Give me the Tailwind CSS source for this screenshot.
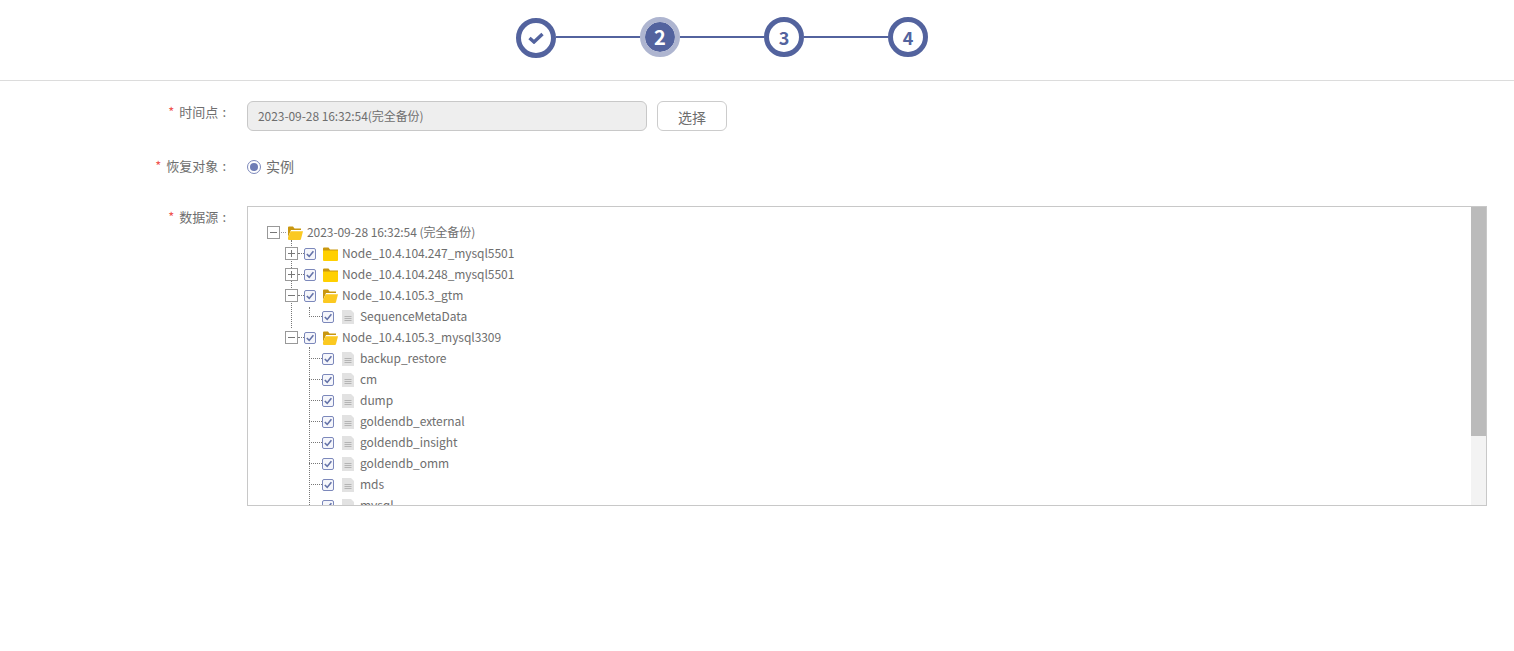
<!DOCTYPE html>
<html lang="en">
<head>
<meta charset="UTF-8">
<title>恢复</title>
<script src="https://cdn.jsdelivr.net/npm/@tailwindcss/browser@4"></script>
</head>
<body class="bg-white text-[#6e6e6e] font-['Noto_Sans_CJK_SC','Noto_Sans',sans-serif]">
<svg class="hidden">
  <symbol id="open" viewBox="0 0 15 14"><path d="M0 1.5 a1 1 0 0 1 1-1 h4 l1.5 2 H13 v1.5 H3 L0 11z" fill="#c9970f"/><path d="M2.6 5.2 H15 L13 13 Q12.8 14 12 14 H1 Q0 14 0 13 V11.5 z" fill="#fbc921"/></symbol>
  <symbol id="closed" viewBox="0 0 15 14"><path d="M0 1.5 a1 1 0 0 1 1-1 h4.5 l1.5 2 H15 V4 H0z" fill="#c9970f"/><path d="M0 3.5 H15 V13 a1 1 0 0 1-1 1 H1 a1 1 0 0 1-1-1z" fill="#ffd000"/></symbol>
  <symbol id="file" viewBox="0 0 12 14"><path d="M0 0 H9 L12 3 V14 H0z" fill="#e2e2e2"/><path d="M2.5 6.5 H9.5 M2.5 8.5 H9.5 M2.5 10.5 H9.5" stroke="#b4b4b4" stroke-width="1"/></symbol>
  <symbol id="check" viewBox="0 0 12 12"><rect x=".5" y=".5" width="11" height="11" rx="1.5" fill="#f5f6fb" stroke="#7c88bb"/><path d="M2.8 6 L5.2 8.4 L9.4 3.2" fill="none" stroke="#6472a8" stroke-width="1.6"/></symbol>
  <symbol id="minus" viewBox="0 0 13 13"><rect x=".5" y=".5" width="12" height="12" fill="#fff" stroke="#999"/><path d="M3 6.5 H10" stroke="#777"/></symbol>
  <symbol id="plus" viewBox="0 0 13 13"><rect x=".5" y=".5" width="12" height="12" fill="#fff" stroke="#999"/><path d="M3 6.5 H10 M6.5 3 V10" stroke="#777"/></symbol>
</svg>

<!-- Steps -->
<div class="h-[81px] border-b border-[#dcdcdc] pl-[516px] pt-[17px]">
  <div class="flex items-start">
    <div class="w-10 h-10 mt-px rounded-full border-[5px] border-[#53639e] flex items-center justify-center">
      <svg class="w-4 h-3" viewBox="0 0 16 12"><path d="M1.5 6 L6 10 L14.5 2" fill="none" stroke="#53639e" stroke-width="3.4"/></svg>
    </div>
    <div class="w-[84px] h-[2px] mt-[19px] bg-[#53639e]"></div>
    <div class="w-10 h-10 rounded-full border-[5px] border-[#aeb5d0] bg-[#53639e] bg-clip-padding text-white font-bold text-[20px] flex items-center justify-center">2</div>
    <div class="w-[84px] h-[2px] mt-[19px] bg-[#53639e]"></div>
    <div class="w-10 h-10 rounded-full border-[5px] border-[#53639e] text-[#53639e] font-bold text-[18px] flex items-center justify-center">3</div>
    <div class="w-[84px] h-[2px] mt-[19px] bg-[#53639e]"></div>
    <div class="w-10 h-10 rounded-full border-[5px] border-[#53639e] text-[#53639e] font-bold text-[18px] flex items-center justify-center">4</div>
  </div>
</div>

<!-- Form -->
<div class="pt-5">
  <div class="flex items-start h-[30px]">
    <label class="w-[247px] pr-[21px] text-right text-[13px] leading-[22px]"><span class="text-[#f0554f] mr-[5px]">*</span>时间点<span class="ml-[4px]">:</span></label>
    <div class="w-[400px] h-[30px] rounded-md border border-[#c8c8c8] bg-[#eeeeee] px-[10px] text-[12px] tracking-[-0.06px] leading-[27px]">2023-09-28 16:32:54(完全备份)</div>
    <button class="ml-[10px] w-[70px] h-[30px] rounded-md border border-[#cccccc] text-[14px] leading-[30px]">选择</button>
  </div>
  <div class="flex items-center h-6 mt-6">
    <label class="w-[247px] pr-[21px] pb-[2px] text-right text-[13px]"><span class="text-[#f0554f] mr-[5px]">*</span>恢复对象<span class="ml-[4px]">:</span></label>
    <span class="w-[14px] h-[14px] rounded-full border border-[#7c88bb] flex items-center justify-center"><span class="w-2 h-2 rounded-full bg-[#6f7db5]"></span></span>
    <span class="ml-[5px] pb-[2px] text-[14px]">实例</span>
  </div>
  <div class="flex items-start mt-[27px]">
    <label class="w-[247px] pr-[21px] text-right text-[13px] leading-[22px]"><span class="text-[#f0554f] mr-[5px]">*</span>数据源<span class="ml-[4px]">:</span></label>
    <div class="w-[1240px] h-[300px] border border-[#c8c8c8] flex">
      <div class="relative flex-1 overflow-hidden pt-[15px] text-[12px] tracking-[-0.06px] [&>div>span:last-child]:pb-[2px]">
        <!-- dotted connectors -->
        <div class="absolute left-[43px] top-[33px] h-[88px] border-l border-dotted border-[#777]"></div>
        <div class="absolute left-[61px] top-[100px] h-[10px] border-l border-dotted border-[#777]"></div>
        <div class="absolute left-[61px] top-[140px] h-[160px] border-l border-dotted border-[#777]"></div>

        <div class="h-[21px] flex items-center pl-[19px]">
          <svg class="w-[13px] h-[13px]"><use href="#minus"/></svg>
          <span class="w-[5px] ml-[1px] border-t border-dotted border-[#999]"></span>
          <svg class="ml-[2px] w-[15px] h-[14px]"><use href="#open"/></svg>
          <span class="ml-[4px] whitespace-nowrap">2023-09-28 16:32:54 (完全备份)</span>
        </div>

        <div class="h-[21px] flex items-center pl-[37px]">
          <svg class="w-[13px] h-[13px] z-10"><use href="#plus"/></svg>
          <span class="w-[6px] border-t border-dotted border-[#777]"></span>
          <svg class="w-3 h-3"><use href="#check"/></svg>
          <svg class="ml-[7px] w-[15px] h-[14px]"><use href="#closed"/></svg>
          <span class="ml-1">Node_10.4.104.247_mysql5501</span>
        </div>
        <div class="h-[21px] flex items-center pl-[37px]">
          <svg class="w-[13px] h-[13px] z-10"><use href="#plus"/></svg>
          <span class="w-[6px] border-t border-dotted border-[#777]"></span>
          <svg class="w-3 h-3"><use href="#check"/></svg>
          <svg class="ml-[7px] w-[15px] h-[14px]"><use href="#closed"/></svg>
          <span class="ml-1">Node_10.4.104.248_mysql5501</span>
        </div>
        <div class="h-[21px] flex items-center pl-[37px]">
          <svg class="w-[13px] h-[13px] z-10"><use href="#minus"/></svg>
          <span class="w-[6px] border-t border-dotted border-[#777]"></span>
          <svg class="w-3 h-3"><use href="#check"/></svg>
          <svg class="ml-[7px] w-[15px] h-[14px]"><use href="#open"/></svg>
          <span class="ml-1">Node_10.4.105.3_gtm</span>
        </div>
        <div class="h-[21px] flex items-center pl-[61px]">
          <span class="w-[13px] border-t border-dotted border-[#777]"></span>
          <svg class="w-3 h-3"><use href="#check"/></svg>
          <svg class="ml-[8px] w-3 h-[14px]"><use href="#file"/></svg>
          <span class="ml-[6px]">SequenceMetaData</span>
        </div>
        <div class="h-[21px] flex items-center pl-[37px]">
          <svg class="w-[13px] h-[13px] z-10"><use href="#minus"/></svg>
          <span class="w-[6px] border-t border-dotted border-[#777]"></span>
          <svg class="w-3 h-3"><use href="#check"/></svg>
          <svg class="ml-[7px] w-[15px] h-[14px]"><use href="#open"/></svg>
          <span class="ml-1">Node_10.4.105.3_mysql3309</span>
        </div>
        <div class="h-[21px] flex items-center pl-[61px]">
          <span class="w-[13px] border-t border-dotted border-[#777]"></span>
          <svg class="w-3 h-3"><use href="#check"/></svg>
          <svg class="ml-[8px] w-3 h-[14px]"><use href="#file"/></svg>
          <span class="ml-[6px]">backup_restore</span>
        </div>
        <div class="h-[21px] flex items-center pl-[61px]">
          <span class="w-[13px] border-t border-dotted border-[#777]"></span>
          <svg class="w-3 h-3"><use href="#check"/></svg>
          <svg class="ml-[8px] w-3 h-[14px]"><use href="#file"/></svg>
          <span class="ml-[6px]">cm</span>
        </div>
        <div class="h-[21px] flex items-center pl-[61px]">
          <span class="w-[13px] border-t border-dotted border-[#777]"></span>
          <svg class="w-3 h-3"><use href="#check"/></svg>
          <svg class="ml-[8px] w-3 h-[14px]"><use href="#file"/></svg>
          <span class="ml-[6px]">dump</span>
        </div>
        <div class="h-[21px] flex items-center pl-[61px]">
          <span class="w-[13px] border-t border-dotted border-[#777]"></span>
          <svg class="w-3 h-3"><use href="#check"/></svg>
          <svg class="ml-[8px] w-3 h-[14px]"><use href="#file"/></svg>
          <span class="ml-[6px]">goldendb_external</span>
        </div>
        <div class="h-[21px] flex items-center pl-[61px]">
          <span class="w-[13px] border-t border-dotted border-[#777]"></span>
          <svg class="w-3 h-3"><use href="#check"/></svg>
          <svg class="ml-[8px] w-3 h-[14px]"><use href="#file"/></svg>
          <span class="ml-[6px]">goldendb_insight</span>
        </div>
        <div class="h-[21px] flex items-center pl-[61px]">
          <span class="w-[13px] border-t border-dotted border-[#777]"></span>
          <svg class="w-3 h-3"><use href="#check"/></svg>
          <svg class="ml-[8px] w-3 h-[14px]"><use href="#file"/></svg>
          <span class="ml-[6px]">goldendb_omm</span>
        </div>
        <div class="h-[21px] flex items-center pl-[61px]">
          <span class="w-[13px] border-t border-dotted border-[#777]"></span>
          <svg class="w-3 h-3"><use href="#check"/></svg>
          <svg class="ml-[8px] w-3 h-[14px]"><use href="#file"/></svg>
          <span class="ml-[6px]">mds</span>
        </div>
        <div class="h-[21px] flex items-center pl-[61px]">
          <span class="w-[13px] border-t border-dotted border-[#777]"></span>
          <svg class="w-3 h-3"><use href="#check"/></svg>
          <svg class="ml-[8px] w-3 h-[14px]"><use href="#file"/></svg>
          <span class="ml-[6px]">mysql</span>
        </div>
      </div>
      <div class="w-[15px] bg-[#f3f3f3]"><div class="h-[229px] bg-[#bbbbbb]"></div></div>
    </div>
  </div>
</div>
</body>
</html>
